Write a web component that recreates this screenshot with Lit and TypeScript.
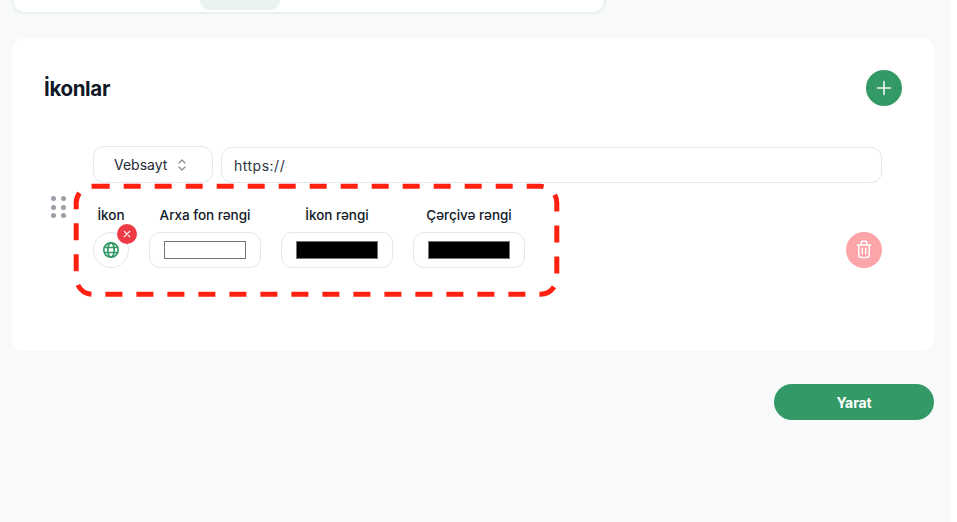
import { LitElement, html, css } from "lit";
import { customElement } from "lit/decorators.js";

@customElement("app-root")
export class AppRoot extends LitElement {
  static styles = css`
    :host { display: block; width: 957px; height: 522px; overflow: hidden; background: #fff; font-family: Inter, "Noto Sans", sans-serif; color: #111827; }
    * { box-sizing: border-box; }
    .page { width: 951px; height: 522px; background: #f8f9fb; padding: 0 17px 0 12px; display: flex; flex-direction: column; }
    .top { width: 594px; height: 14px; background: #fff; border: 2px solid #e9f2ee; border-top: 0; border-radius: 0 0 12px 12px; padding-left: 186px; flex: none; }
    .pill { width: 80px; height: 10px; background: #e8f2ee; border-radius: 0 0 10px 10px; }
    .card { margin-top: 24px; background: #fff; border-radius: 12px; padding: 32px 32px 83px; }
    .head { display: flex; justify-content: space-between; align-items: center; height: 36px; }
    h2 { margin: 0; font-size: 20.5px; font-weight: 700; letter-spacing: -0.35px; color: #101827; }
    .round { width: 36px; height: 36px; border-radius: 50%; border: 0; padding: 0; display: flex; align-items: center; justify-content: center; flex: none; }
    .plus { background: #339966; }
    .row { margin-top: 40px; display: flex; padding: 0 20px 0 7px; }
    .handle { width: 16px; height: 22px; margin: 50px 26px 0 0; display: grid; grid-template-columns: 5px 5px; gap: 3.5px 5px; flex: none; align-content: start; }
    .handle i { width: 5px; height: 5px; border-radius: 50%; background: #9a9ea6; }
    .main { flex: 1; min-width: 0; }
    .link { display: flex; gap: 8px; }
    .select { width: 120px; height: 37px; border: 1px solid #e2e8f0; border-radius: 11px; display: flex; align-items: center; padding-left: 20px; gap: 10px; font-size: 14px; color: #1f2937; letter-spacing: 0; }
    .url { flex: 1; height: 36px; margin-top: 1px; border: 1px solid #e2e8f0; border-radius: 11px; display: flex; align-items: center; padding-left: 12px; font-size: 14px; letter-spacing: 0.5px; color: #2b3442; }
    .lower { display: flex; justify-content: space-between; align-items: flex-end; padding-top: 22px; }
    .fields { position: relative; display: flex; gap: 20px; }
    .field { display: flex; flex-direction: column; align-items: center; gap: 7px; }
    .label { font-size: 13.5px; line-height: 20px; font-weight: 450; color: #111827; letter-spacing: -0.03px; white-space: nowrap; }
    .box { width: 112px; height: 36px; border: 1px solid #e2e8f0; border-radius: 11px; display: flex; align-items: center; justify-content: center; }
    .swatch { width: 82px; height: 18px; border: 1px solid #767676; background: #000; }
    .swatch.white { background: #fff; }
    .icon { position: relative; width: 36px; height: 36px; border: 1px solid #e2e8f0; border-radius: 50%; display: flex; align-items: center; justify-content: center; }
    .remove { position: absolute; left: 23px; top: -9px; width: 20px; height: 20px; border-radius: 50%; background: #ef3b46; display: flex; align-items: center; justify-content: center; }
    .frame { position: absolute; left: -19.5px; top: -21px; pointer-events: none; overflow: visible; }
    .trash { background: #fca5a8; }
    .foot { display: flex; justify-content: flex-end; margin-top: 33px; }
    .create { width: 160px; height: 36px; border: 0; border-radius: 18px; background: #339966; color: #fff; font: 700 14px Inter, sans-serif; letter-spacing: -0.1px; }
  `;

  render() {
    return html`<div class="page">
      <div class="top"><div class="pill"></div></div>
      <section class="card">
        <div class="head">
          <h2>İkonlar</h2>
          <button class="round plus" aria-label="Əlavə et">
            <svg width="16" height="16" viewBox="0 0 16 16" fill="none" stroke="#eef6f2" stroke-width="1.6" stroke-linecap="round"><path d="M8 1.500v13M1.500 8h13"/></svg>
          </button>
        </div>
        <div class="row">
          <div class="handle">${[0, 1, 2, 3, 4, 5].map(() => html`<i></i>`)}</div>
          <div class="main">
            <div class="link">
              <div class="select">Vebsayt
                <svg width="10" height="14" viewBox="0 0 10 14" fill="none" stroke="#8b9099" stroke-width="1.300" stroke-linecap="round" stroke-linejoin="round"><path d="M2 5 5 2l3 3M2 9l3 3 3-3"/></svg>
              </div>
              <div class="url">https://</div>
            </div>
            <div class="lower">
              <div class="fields">
                <div class="field">
                  <span class="label">İkon</span>
                  <div class="icon">
                    <svg width="18" height="18" viewBox="0 0 18 18" fill="none" stroke="#339966" stroke-width="1.700"><circle cx="9" cy="9" r="7.200"/><ellipse cx="9" cy="9" rx="3.200" ry="7.200"/><path d="M2.200 6.500h13.600M2.200 11.500h13.600"/></svg>
                    <span class="remove"><svg width="8" height="8" viewBox="0 0 8 8" fill="none" stroke="#fff" stroke-width="1.200" stroke-linecap="round"><path d="m1.300 1.300 5.400 5.400M6.700 1.300 1.300 6.700"/></svg></span>
                  </div>
                </div>
                <div class="field"><span class="label">Arxa fon rəngi</span><div class="box"><div class="swatch white"></div></div></div>
                <div class="field"><span class="label">İkon rəngi</span><div class="box"><div class="swatch"></div></div></div>
                <div class="field"><span class="label">Çərçivə rəngi</span><div class="box"><div class="swatch"></div></div></div>
                <svg class="frame" width="484" height="112" viewBox="0 0 484 112" fill="none"><rect x="2.200" y="2.300" width="480.600" height="108" rx="16.500" stroke="#ff2010" stroke-width="5" stroke-dasharray="17 14"/></svg>
              </div>
              <button class="round trash" aria-label="Sil">
                <svg width="18" height="20" viewBox="0 0 16 18" fill="none" stroke="#fff" stroke-width="1.300" stroke-linecap="round" stroke-linejoin="round"><path d="M2 4.500h12M5.500 4.500V2.300a1.200 1.200 0 0 1 1.200-1.200h2.600a1.200 1.200 0 0 1 1.200 1.200v2.200M3.300 4.500v9a2.300 2.300 0 0 0 2.300 2.300h4.800a2.300 2.300 0 0 0 2.300-2.300v-9M6.500 7.500v5M9.500 7.500v5"/></svg>
              </button>
            </div>
          </div>
        </div>
      </section>
      <div class="foot"><button class="create">Yarat</button></div>
    </div>`;
  }
}
